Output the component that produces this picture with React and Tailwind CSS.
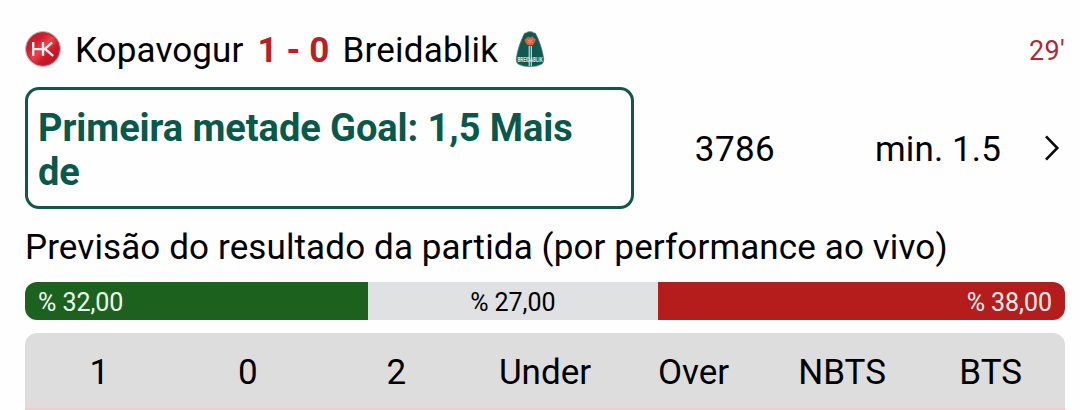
import React from 'react';

const match = {
  home: 'Kopavogur',
  away: 'Breidablik',
  score: '1 - 0',
  minute: "29'",
  tip: 'Primeira metade Goal: 1,5 Mais de',
  code: '3786',
  minOdd: 'min. 1.5',
};

const forecast = [
  { value: 32, label: '% 32,00', className: 'bg-[#1c611e] text-[#f0fff0] text-left' },
  { value: 27, label: '% 27,00', className: 'bg-[#dfe1e2] text-black text-center' },
  { value: 38, label: '% 38,00', className: 'bg-[#b51c1c] text-[#fff0ec] text-right' },
];

const markets = ['1', '0', '2', 'Under', 'Over', 'NBTS', 'BTS'];

function HomeCrest() {
  return (
    <svg viewBox="0 0 36 36" className="w-9 h-9 shrink-0">
      <defs>
        <linearGradient id="homeRed" x1="0" y1="0" x2="1" y2="1">
          <stop offset="0" stopColor="#bd1626" />
          <stop offset="0.3" stopColor="#d01c2b" />
          <stop offset="0.48" stopColor="#e8424c" />
          <stop offset="0.65" stopColor="#cf1828" />
          <stop offset="1" stopColor="#a81420" />
        </linearGradient>
      </defs>
      <circle cx="18" cy="18" r="17.3" fill="url(#homeRed)" stroke="#cfa5a8" strokeWidth="1.1" />
      <circle cx="18" cy="18" r="16.2" fill="none" stroke="#a9303b" strokeWidth="0.9" />
      <g fill="none" stroke="#fff0f0" strokeWidth="2.4">
        <path d="M8.2 11V24.7M8.2 18.1H20M18 11V24.7" />
        <path d="M27.2 11.3L20 17.9L28.2 24.9" />
      </g>
    </svg>
  );
}

function AwayCrest() {
  return (
    <svg viewBox="0 0 30 36" className="block w-[30px] h-9 shrink-0 tracking-normal overflow-visible">
      <path
        d="M9.5 2.2Q12 2 13 .8H17Q18 2 20.5 2.2C24.2 9.5 27.4 18 28.7 27.5Q29.2 31.5 26.5 33.3Q21.5 35.8 15 35.6Q8.5 35.8 3.5 33.3Q.8 31.5 1.3 27.5C2.6 18 5.8 9.5 9.5 2.2Z"
        fill="#0f5a50"
        stroke="#547f79"
        strokeWidth="0.7"
      />
      <path d="M14.2 15V35M16.3 15V35" stroke="#d8e6e1" strokeWidth="1.1" />
      <path d="M9.4 9L11.6 7L13.2 5.4L15 6.6L17.2 5.3L19 7L20.9 8.6L19.8 11.2L18 14L15 14.6L12 13.8L10.4 11.2Z" fill="#d95a3b" />
      <path d="M12 8.6L18 12M18 8.4L12.4 12M15 7.5V13" stroke="#ef9a72" strokeWidth="0.7" />
      <text
        x="2.5"
        y="30.6"
        textLength="25"
        lengthAdjust="spacingAndGlyphs"
        fontSize="7.5"
        fontWeight="700"
        fill="#dfeae6"
      >
        BREIDABLIK
      </text>
    </svg>
  );
}

export default function App() {
  return (
    <div className="w-full h-[410px] overflow-hidden bg-[#fefefe] pl-[25px] pr-[15px] pt-8 text-black text-[35px] leading-[38px] tracking-[0.12px] font-['Roboto',sans-serif]">
      {/* Teams and score */}
      <div className="flex items-center h-[38px] mb-[17px]">
        <div className="-mt-1">
          <HomeCrest />
        </div>
        <span className="ml-[14px]">{match.home}</span>
        <span className="ml-[14px] font-bold text-[#b92025]">{match.score}</span>
        <span className="ml-[13px] tracking-[0.22px]">{match.away}</span>
        <div className="-mt-1 ml-[17px]">
          <AwayCrest />
        </div>
        <span className="ml-auto text-[27px] tracking-[0.3px] text-[#ad2935]">{match.minute}</span>
      </div>

      {/* Tip */}
      <div className="flex items-center h-[122px]">
        <div className="flex items-center w-[609px] h-full border-[3px] border-[#125749] rounded-[14px] pl-[10px] pr-5 pt-[4px]">
          <span className="font-bold text-[38px] leading-[44px] tracking-[-0.06px] text-[#09594a]">{match.tip}</span>
        </div>
        <span className="w-[202px] text-center pt-[3px] tracking-[0.4px]">{match.code}</span>
        <span className="ml-auto pt-[3px]">{match.minOdd}</span>
        <svg viewBox="0 0 16 28" className="w-4 h-7 ml-[43px] mr-[5px]" fill="none" stroke="#0a0a0a" strokeWidth="2.6">
          <path d="M2 2.3L13.3 14L2 25.7" />
        </svg>
      </div>

      {/* Result forecast */}
      <h2 className="mt-5 mb-[15px]">Previsão do resultado da partida (por performance ao vivo)</h2>
      <div className="flex h-[38px] rounded-xl overflow-hidden text-[25px] leading-[42px] tracking-[-0.05px]">
        {forecast.map(f => (
          <div key={f.label} className={`basis-0 ${f.className}`} style={{ flexGrow: f.value }}>
            <span className="mx-[13px]">{f.label}</span>
          </div>
        ))}
      </div>

      {/* Markets */}
      <div className="mt-[13px] rounded-t-xl overflow-hidden bg-[#dddddd]">
        <div className="grid grid-cols-7 h-[75px] pt-[21px] text-center tracking-normal">
          {markets.map(m => (
            <span key={m}>{m}</span>
          ))}
        </div>
        <div className="h-4 bg-[#f3ccd0]" />
      </div>
    </div>
  );
}
